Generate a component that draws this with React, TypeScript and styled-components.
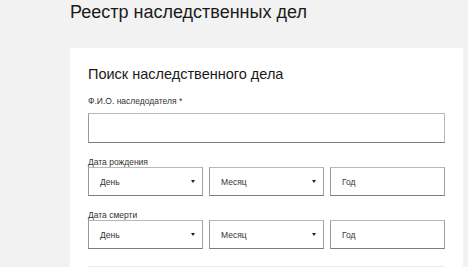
import { createGlobalStyle } from "styled-components";
import styled from "styled-components";

const GlobalStyle = createGlobalStyle`
  html, body {
    margin: 0;
    background: #f2f2f2;
    font-family: "Liberation Sans", Arial, sans-serif;
    color: #222;
  }
`;

const Page = styled.div`
  padding: 2px 5px 0 70px;
  height: 267px;
  box-sizing: border-box;
  overflow: hidden;
`;

const Title = styled.h1`
  margin: 0 0 26px;
  font-size: 18px;
  line-height: 20px;
  font-weight: 400;
  color: #1a1a1a;
`;

const Card = styled.section`
  background: #fff;
  padding: 18px 18px 0;
  height: 240px;
`;

const CardTitle = styled.h2`
  margin: 0 0 14px;
  font-size: 14.5px;
  line-height: 16px;
  font-weight: 400;
  color: #1a1a1a;
`;

const Field = styled.div`
  display: flex;
  flex-direction: column;
  margin-bottom: 14px;
`;

const Label = styled.label<{ $gap?: number }>`
  font-size: 8.5px;
  line-height: 10px;
  color: #333;
  margin-bottom: ${(p) => p.$gap ?? 0}px;
`;

const TextInput = styled.div`
  height: 30px;
  box-sizing: border-box;
  border: 1px solid #b8b8b8;
  border-bottom-color: #7c7c7c;
  border-left-color: #9a9a9a;
  background: #fff;
`;

const DateRow = styled.div`
  display: grid;
  grid-template-columns: repeat(3, 1fr);
  gap: 6px;
`;

const Box = styled.div`
  height: 29px;
  box-sizing: border-box;
  border: 1px solid #b8b8b8;
  border-bottom-color: #7c7c7c;
  border-left-color: #9a9a9a;
  border-right-color: #a0a0a0;
  background: #fff;
  display: flex;
  align-items: center;
  justify-content: space-between;
  padding: 0 7px 0 11px;
  font-size: 8.5px;
  color: #333;
`;

const Arrow = styled.span`
  width: 0;
  height: 0;
  border-left: 2.5px solid transparent;
  border-right: 2.5px solid transparent;
  border-top: 3px solid #222;
`;

const Divider = styled.hr`
  margin: 17px 0 0;
  border: 0;
  border-top: 1px solid #ececec;
`;

function DateField({ label }: { label: string }) {
  return (
    <Field>
      <Label>{label}</Label>
      <DateRow>
        <Box>
          День
          <Arrow />
        </Box>
        <Box>
          Месяц
          <Arrow />
        </Box>
        <Box>Год</Box>
      </DateRow>
    </Field>
  );
}

export default function App() {
  return (
    <Page>
      <GlobalStyle />
      <Title>Реестр наследственных дел</Title>
      <Card>
        <CardTitle>Поиск наследственного дела</CardTitle>
        <Field>
          <Label $gap={7}>Ф.И.О. наследодателя *</Label>
          <TextInput />
        </Field>
        <DateField label="Дата рождения" />
        <DateField label="Дата смерти" />
        <Divider />
      </Card>
    </Page>
  );
}
